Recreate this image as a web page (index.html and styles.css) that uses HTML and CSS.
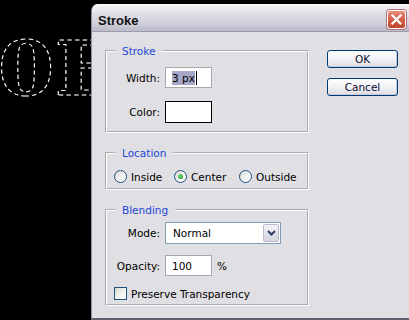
FILE: index.html
```html
<!DOCTYPE html>
<html lang="en">
<head>
    <meta charset="UTF-8">
    <meta name="viewport" content="width=device-width, initial-scale=1.0">
    <title>Stroke</title>
    <link rel="stylesheet" href="styles.css">
</head>
<body>
    <div class="desktop">
        <svg class="marquee" width="91" height="320" viewBox="0 0 91 320">
            <text x="-2" y="95" transform="scale(1.1 1)" class="marquee-text">0E</text>
        </svg>
        <div class="dialog">
            <div class="titlebar">
                <span class="title">Stroke</span>
                <span class="close">
                    <svg width="17" height="17" viewBox="0 0 17 17">
                        <path d="M4.5 4.5 L12.5 12.5 M12.5 4.5 L4.5 12.5" stroke="#fff" stroke-width="2.2" stroke-linecap="square"/>
                    </svg>
                </span>
            </div>
            <div class="client">
                <div class="groups">
                    <fieldset class="group stroke">
                        <legend>Stroke</legend>
                        <div class="row row-width">
                            <span class="label">Width:</span>
                            <span class="field"><span class="selected">3 px</span><span class="caret"></span></span>
                        </div>
                        <div class="row row-color">
                            <span class="label">Color:</span>
                            <span class="swatch"></span>
                        </div>
                    </fieldset>
                    <fieldset class="group location">
                        <legend>Location</legend>
                        <div class="radios">
                            <span class="option"><span class="radio"></span>Inside</span>
                            <span class="option"><span class="radio checked"></span>Center</span>
                            <span class="option"><span class="radio"></span>Outside</span>
                        </div>
                    </fieldset>
                    <fieldset class="group blending">
                        <legend>Blending</legend>
                        <div class="row row-mode">
                            <span class="label">Mode:</span>
                            <span class="select">
                                <span class="select-value">Normal</span>
                                <span class="select-btn">
                                    <svg width="9" height="6" viewBox="0 0 9 6">
                                        <path d="M1 1 L4.5 4.5 L8 1" fill="none" stroke="#2f3f63" stroke-width="2"/>
                                    </svg>
                                </span>
                            </span>
                        </div>
                        <div class="row row-opacity">
                            <span class="label">Opacity:</span>
                            <span class="field">100</span>
                            <span class="unit">%</span>
                        </div>
                        <div class="check-row">
                            <span class="checkbox"></span>Preserve Transparency
                        </div>
                    </fieldset>
                </div>
                <div class="buttons">
                    <div class="btn">OK</div>
                    <div class="btn">Cancel</div>
                </div>
            </div>
        </div>
    </div>
</body>
</html>
```

FILE: styles.css
```css
body {
    margin: 0;
    height: 320px;
    overflow: hidden;
    background-color: #000;
    font-family: "DejaVu Sans", sans-serif;
    font-size: 10.5px;
    color: #000;
}
.desktop {
    display: flex;
    align-items: flex-start;
}
.marquee {
    display: block;
    flex: none;
}
.marquee-text {
    font-family: "DejaVu Serif", serif;
    font-weight: bold;
    font-size: 74px;
    fill: none;
    stroke: #fff;
    stroke-width: 1;
    stroke-dasharray: 4 3;
}

/* window frame */
.dialog {
    flex: none;
    width: 330px;
    height: 314px;
    margin-top: 4px;
    background-color: #e0dfe3;
    border-left: 1px solid #8e8ea2;
    border-bottom: 2px solid #5f5f70;
    border-top-left-radius: 7px;
    overflow: hidden;
}
.titlebar {
    display: flex;
    align-items: flex-start;
    height: 27px;
    background: linear-gradient(#fbfbfc 0, #eeeef3 3px, #dedee6 10px, #cfcfda 20px, #bdbdcb 26px);
    border-bottom: 1px solid #9b9bab;
}
.title {
    margin: 9px 0 0 6px;
    font-family: "Liberation Sans", sans-serif;
    font-weight: bold;
    font-size: 13px;
    line-height: 15px;
    color: #111;
}
.close {
    display: flex;
    align-items: center;
    justify-content: center;
    box-sizing: border-box;
    width: 19px;
    height: 19px;
    margin: 6px 16px 0 auto;
    border: 1px solid #fff;
    border-radius: 3px;
    background: linear-gradient(#e88f7c, #d5604a 50%, #bf4530);
    box-shadow: 0 0 0 1px #b0707a;
}

.client {
    display: flex;
    padding: 12px 0 0 13px;
}
.groups {
    display: flex;
    flex-direction: column;
    gap: 13px;
    width: 204px;
}
.buttons {
    display: flex;
    flex-direction: column;
    gap: 10px;
    margin: 6px 0 0 18px;
}
.btn {
    box-sizing: border-box;
    width: 71px;
    height: 18px;
    border: 1px solid #003c74;
    border-radius: 3px;
    background: linear-gradient(#ffffff, #f4f4f7 45%, #dcdce4);
    box-shadow: inset -1px -1px 0 #c8c8d6;
    text-align: center;
    line-height: 16px;
    color: #0c0c30;
}

/* group boxes */
.group {
    margin: 0;
    padding: 0;
    min-width: 0;
    border: 2px groove #fff;
}
.group legend {
    margin-left: 8px;
    padding: 0 7px;
    line-height: 14px;
    color: #2346d8;
}
.stroke {
    padding: 9px 0 8px;
}
.location {
    padding: 10px 0 5px;
}
.blending {
    padding: 5px 0 4px;
}
.row {
    display: flex;
    align-items: center;
}
.label {
    width: 53px;
    margin-right: 5px;
    text-align: right;
}
.row-width {
    height: 21px;
    margin-bottom: 13px;
}
.row-color {
    height: 22px;
}
.row-mode {
    height: 22px;
    margin-bottom: 11px;
}
.row-opacity {
    height: 21px;
    margin-bottom: 11px;
}
.field {
    display: flex;
    align-items: center;
    box-sizing: border-box;
    width: 47px;
    height: 21px;
    padding-left: 6px;
    background-color: #fff;
    border: 1px solid #a7a7ad;
}
.selected {
    padding: 1px 0;
    background-color: #a6a6c6;
}
.caret {
    width: 1px;
    height: 14px;
    margin-left: 1px;
    background-color: #000;
}
.swatch {
    box-sizing: border-box;
    width: 47px;
    height: 22px;
    background-color: #fff;
    border: 1px solid #000;
}
.unit {
    margin-left: 5px;
}

/* radio buttons */
.radios {
    display: grid;
    grid-template-columns: 60px 65px auto;
    height: 13px;
    padding-left: 7px;
}
.option {
    display: flex;
    align-items: center;
}
.radio {
    position: relative;
    box-sizing: border-box;
    width: 13px;
    height: 13px;
    margin-right: 4px;
    border: 1px solid #1c5180;
    border-radius: 50%;
    background: linear-gradient(135deg, #d6d6d0, #f4f4f2 55%, #fff);
}
.radio.checked::after {
    content: "";
    position: absolute;
    left: 3px;
    top: 3px;
    width: 5px;
    height: 5px;
    border-radius: 50%;
    background: radial-gradient(circle at 40% 40%, #8fe08f, #21a121 70%);
}

/* mode select */
.select {
    display: flex;
    align-items: center;
    box-sizing: border-box;
    width: 116px;
    height: 22px;
    padding: 1px;
    background-color: #fff;
    border: 1px solid #7f9db9;
}
.select-value {
    flex: 1;
    padding-left: 6px;
}
.select-btn {
    display: flex;
    align-items: center;
    justify-content: center;
    box-sizing: border-box;
    width: 16px;
    height: 18px;
    border: 1px solid #b9b9cb;
    border-radius: 2px;
    background: linear-gradient(#f4f4f8, #d4d4e0);
}

/* checkbox */
.check-row {
    display: flex;
    align-items: center;
    height: 13px;
    padding-left: 7px;
}
.checkbox {
    box-sizing: border-box;
    width: 13px;
    height: 13px;
    margin-right: 4px;
    border: 1px solid #1c5180;
    background: linear-gradient(135deg, #d6d6d0, #f4f4f2 55%, #fff);
}
```
